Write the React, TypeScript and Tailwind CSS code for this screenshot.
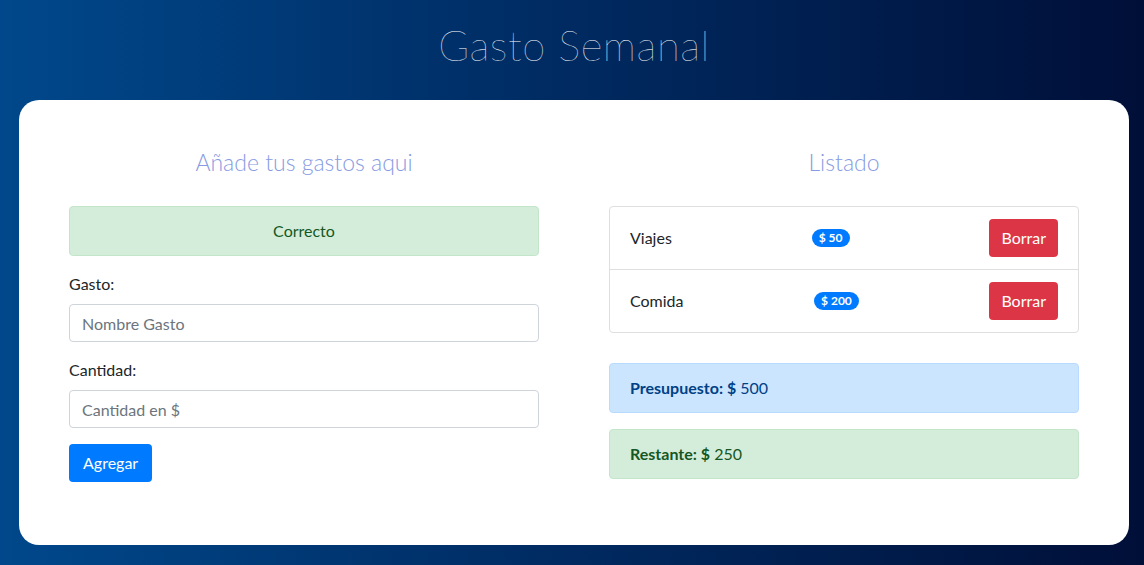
const gastos = [
  { id: 1, nombre: 'Viajes', cantidad: 50 },
  { id: 2, nombre: 'Comida', cantidad: 200 },
];

export default function App() {
  return (
    <div
      className="min-h-screen w-full bg-[linear-gradient(90deg,#00488b_0%,#002d65_45%,#000f38_100%)] pl-[19px] pr-[15px] text-[#212529]"
      style={{ fontFamily: 'Lato, "Open Sans", sans-serif' }}
    >
      {/* Header */}
      <header className="flex h-[100px] items-center justify-center pb-[9px]">
        <h1 className="text-[42px] font-extralight tracking-[0.5px] text-white">Gasto Semanal</h1>
      </header>

      {/* Card */}
      <main className="rounded-[20px] bg-white px-[50px] pb-[63px] pt-[50px]">
        <div className="grid grid-cols-2 gap-[70px]">
          {/* Formulario */}
          <section>
            <h2 className="mb-[31px] text-center text-[23px] font-light leading-[25px] text-[#879be3]">
              Añade tus gastos aqui
            </h2>
            <div className="mb-4 rounded border border-[#c3e6cb] bg-[#d4edda] py-3 text-center leading-6 text-[#155724]">
              Correcto
            </div>
            <div className="mb-4">
              <label className="mb-2 block leading-6">Gasto:</label>
              <input
                type="text"
                placeholder="Nombre Gasto"
                className="h-[38px] w-full rounded border border-[#ced4da] px-3 placeholder:text-[#6c757d]"
              />
            </div>
            <div className="mb-4">
              <label className="mb-2 block leading-6">Cantidad:</label>
              <input
                type="text"
                placeholder="Cantidad en $"
                className="h-[38px] w-full rounded border border-[#ced4da] px-3 placeholder:text-[#6c757d]"
              />
            </div>
            <button className="h-[38px] rounded bg-[#007bff] px-[14px] leading-6 text-white">Agregar</button>
          </section>

          {/* Listado */}
          <section>
            <h2 className="mb-[31px] text-center text-[23px] font-light leading-[25px] text-[#879be3]">Listado</h2>
            <ul className="mb-[30px] rounded border border-[#dfdfdf]">
              {gastos.map((g, i) => (
                <li
                  key={g.id}
                  className={`flex items-center justify-between px-5 ${i > 0 ? 'h-[63px] border-t border-[#dfdfdf]' : 'h-[62px]'}`}
                >
                  <span>{g.nombre}</span>
                  <span className="rounded-full bg-[#007bff] px-[7px] text-[12px] font-bold leading-[18px] text-white">
                    $ {g.cantidad}
                  </span>
                  <button className="h-[38px] rounded bg-[#dc3545] px-3 text-white">Borrar</button>
                </li>
              ))}
            </ul>
            <div className="mb-4 rounded border border-[#b8daff] bg-[#cce5ff] px-5 py-3 leading-6 text-[#004085]">
              <strong>Presupuesto: $</strong> 500
            </div>
            <div className="rounded border border-[#c3e6cb] bg-[#d4edda] px-5 py-3 leading-6 text-[#155724]">
              <strong>Restante: $</strong> 250
            </div>
          </section>
        </div>
      </main>
    </div>
  );
}
